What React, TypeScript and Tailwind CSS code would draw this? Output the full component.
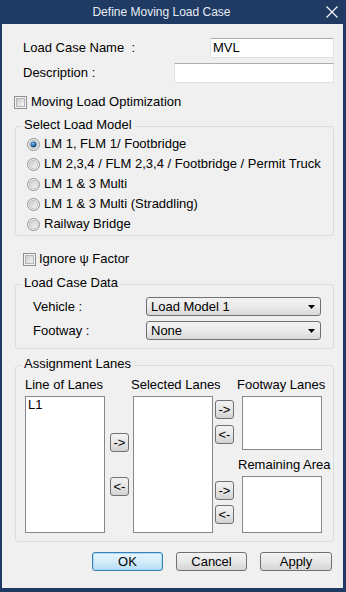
import React from 'react';

const CheckBox: React.FC = () => (
  <svg width="13" height="13" viewBox="0 0 13 13" className="shrink-0">
    <defs>
      <linearGradient id="cbg" x1="0" y1="0" x2="1" y2="1">
        <stop offset="0" stopColor="#cbcbcb" />
        <stop offset="1" stopColor="#f6f6f6" />
      </linearGradient>
    </defs>
    <rect x="0.5" y="0.5" width="12" height="12" fill="#f4f4f4" stroke="#8e8f8f" />
    <rect x="2.5" y="2.5" width="8" height="8" fill="url(#cbg)" stroke="#b2b4b6" />
  </svg>
);

const Radio: React.FC<{ checked?: boolean }> = ({ checked }) => (
  <svg width="13" height="13" viewBox="0 0 13 13" className="shrink-0">
    <defs>
      <linearGradient id="rbg" x1="0" y1="0" x2="1" y2="1">
        <stop offset="0" stopColor="#c8c8c8" />
        <stop offset="1" stopColor="#f8f8f8" />
      </linearGradient>
      <radialGradient id="rdot" cx="0.4" cy="0.35" r="0.7">
        <stop offset="0" stopColor="#8cc4f0" />
        <stop offset="0.5" stopColor="#2a6cb0" />
        <stop offset="1" stopColor="#15406e" />
      </radialGradient>
    </defs>
    <circle cx="6.5" cy="6.5" r="6" fill="#f4f4f4" stroke="#8e8f8f" />
    <circle cx="6.5" cy="6.5" r="4.2" fill="url(#rbg)" stroke="#b4b6b8" strokeWidth="0.8" />
    {checked && <circle cx="6.5" cy="6.5" r="3" fill="url(#rdot)" />}
  </svg>
);

const Group: React.FC<{ title: string; className: string; children?: React.ReactNode }> = ({
  title,
  className,
  children,
}) => (
  <div className={`relative ml-[13px] mr-[9px] border border-[#d5dfe5] rounded-[3px] ${className}`}>
    <span className="absolute -top-[9px] left-[6px] px-[2px] h-[14px] leading-[14px] bg-[#f0f0f0]">
      {title}
    </span>
    {children}
  </div>
);

const SmallButton: React.FC<{ label: string; className?: string }> = ({ label, className = '' }) => (
  <div
    className={`w-[19px] h-[19px] flex items-center justify-center rounded-[3px] border border-[#707070] bg-gradient-to-b from-[#f2f2f2] via-[#e6e6e6] to-[#d2d2d2] text-[13px] leading-none ${className}`}
  >
    {label}
  </div>
);

const Combo: React.FC<{ value: string }> = ({ value }) => (
  <div className="w-[175px] h-[19px] flex items-center rounded-[3px] border border-[#707070] bg-gradient-to-b from-[#f2f2f2] via-[#ebebeb] to-[#d8d8d8] pl-[4px] pr-[5px]">
    <span className="flex-1">{value}</span>
    <svg width="7" height="4" viewBox="0 0 7 4">
      <path d="M0 0 L7 0 L3.5 4 Z" fill="#000" />
    </svg>
  </div>
);

const ListBox: React.FC<{ className: string; items?: string[] }> = ({ className, items = [] }) => (
  <div className={`border border-[#828790] bg-white pl-[2px] pt-[1px] leading-[14px] ${className}`}>
    {items.map((i) => (
      <div key={i}>{i}</div>
    ))}
  </div>
);

const DialogButton: React.FC<{ label: string; primary?: boolean; className?: string }> = ({
  label,
  primary,
  className = '',
}) => (
  <div
    className={
      primary
        ? `h-[19px] flex items-center justify-center rounded-[3px] border border-[#3c7fb1] bg-gradient-to-b from-[#e8f5fc] via-[#d4ecf9] to-[#b4ddf4] shadow-[inset_0_0_0_1px_#a6dcf5] ${className}`
        : `h-[19px] flex items-center justify-center rounded-[3px] border border-[#707070] bg-gradient-to-b from-[#f2f2f2] via-[#e8e8e8] to-[#d4d4d4] ${className}`
    }
  >
    {label}
  </div>
);

const models = [
  'LM 1, FLM 1/ Footbridge',
  'LM 2,3,4 / FLM 2,3,4 / Footbridge / Permit Truck',
  'LM 1 & 3 Multi',
  'LM 1 & 3 Multi (Straddling)',
  'Railway Bridge',
];

export default function App() {
  return (
    <div className="w-[346px] h-[592px] bg-[#1f3a63] flex flex-col font-['Liberation_Sans',Arial,sans-serif] text-[13px] text-black">
      {/* title bar */}
      <div className="h-[24px] flex items-center shrink-0">
        <span className="w-[323px] text-center text-[12px] text-[#e6ecf4]">Define Moving Load Case</span>
        <svg width="12" height="12" viewBox="0 0 12 12" className="ml-[3px]">
          <path d="M0.5 0.5 L11.5 11.5 M11.5 0.5 L0.5 11.5" stroke="#f4f6fa" strokeWidth="1.2" />
        </svg>
      </div>

      <div className="flex-1 ml-[2px] mr-[3px] mb-[4px] bg-[#f0f0f0] flex flex-col">
        <div className="mt-[14px] h-[20px] flex items-center">
          <span className="pl-[21px] whitespace-pre">Load Case Name  :</span>
          <div className="ml-auto mr-[9px] w-[124px] h-[20px] bg-white border border-[#dde2e8] border-t-[#abadb3] pl-[2px] flex items-center">
            MVL
          </div>
        </div>
        <div className="mt-[5px] h-[20px] flex items-center">
          <span className="pl-[21px]">Description :</span>
          <div className="ml-auto mr-[9px] w-[160px] h-[20px] bg-white border border-[#dde2e8] border-t-[#abadb3]" />
        </div>

        <div className="mt-[12px] h-[14px] flex items-center pl-[12px]">
          <CheckBox />
          <span className="ml-[4px]">Moving Load Optimization</span>
        </div>

        <Group title="Select Load Model" className="mt-[17px] h-[110px] pt-[7px]">
          {models.map((m, i) => (
            <div key={m} className="h-[20px] flex items-center pl-[11px]">
              <Radio checked={i === 0} />
              <span className="ml-[4px]">{m}</span>
            </div>
          ))}
        </Group>

        <div className="mt-[16px] h-[14px] flex items-center pl-[21px]">
          <CheckBox />
          <span className="ml-[3px]">Ignore ψ Factor</span>
        </div>

        <Group title="Load Case Data" className="mt-[18px] h-[65px] pt-[12px]">
          <div className="h-[19px] flex items-center">
            <span className="pl-[17px] w-[130px]">Vehicle :</span>
            <Combo value="Load Model 1" />
          </div>
          <div className="mt-[5px] h-[19px] flex items-center">
            <span className="pl-[17px] w-[130px]">Footway :</span>
            <Combo value="None" />
          </div>
        </Group>

        <Group title="Assignment Lanes" className="mt-[16px] h-[177px] flex items-start">
          <div className="ml-[9px] w-[80px] pt-[12px] flex flex-col">
            <span className="h-[14px] leading-[14px] whitespace-nowrap">Line of Lanes</span>
            <ListBox className="mt-[4px] h-[137px]" items={['L1']} />
          </div>
          <div className="ml-[5px] pt-[67px] flex flex-col">
            <SmallButton label="->" />
            <SmallButton label="<-" className="mt-[25px]" />
          </div>
          <div className="ml-[4px] w-[80px] pt-[12px] flex flex-col">
            <span className="-ml-[2px] h-[14px] leading-[14px] whitespace-nowrap">Selected Lanes</span>
            <ListBox className="mt-[4px] h-[137px]" />
          </div>
          <div className="ml-[2px] pt-[34px] flex flex-col">
            <SmallButton label="->" />
            <SmallButton label="<-" className="mt-[6px]" />
            <SmallButton label="->" className="mt-[37px]" />
            <SmallButton label="<-" className="mt-[5px]" />
          </div>
          <div className="ml-[8px] w-[80px] pt-[12px] flex flex-col">
            <span className="-ml-[5px] h-[14px] leading-[14px] whitespace-nowrap">Footway Lanes</span>
            <ListBox className="mt-[4px] h-[54px]" />
            <span className="mt-[8px] -ml-[4px] h-[14px] leading-[14px] whitespace-nowrap">Remaining Area</span>
            <ListBox className="mt-[4px] h-[57px]" />
          </div>
        </Group>

        <div className="mt-[10px] mr-[11px] flex justify-end gap-[13px]">
          <DialogButton label="OK" primary className="w-[71px]" />
          <DialogButton label="Cancel" className="w-[71px]" />
          <DialogButton label="Apply" className="w-[72px]" />
        </div>
      </div>
    </div>
  );
}
